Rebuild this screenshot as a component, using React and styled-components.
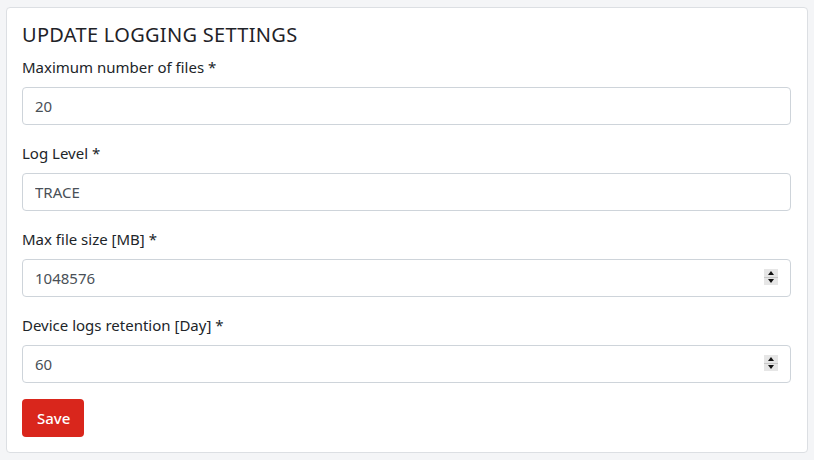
import React from 'react';
import styled, { createGlobalStyle } from 'styled-components';

const GlobalStyle = createGlobalStyle`
  html, body {
    margin: 0;
    padding: 0;
    background: #f4f5f7;
  }
  body {
    font-family: "Noto Sans", "Open Sans", sans-serif;
    color: #212529;
  }
`;

const Page = styled.div`
  padding: 7px 6px 0 6px;
`;

const Card = styled.div`
  background: #fff;
  border: 1px solid #dcdfe3;
  border-radius: 4px;
  padding: 15px 16px 15px 15px;
`;

const Title = styled.h4`
  margin: 0 0 8px 0;
  font-size: 20px;
  font-weight: 400;
  line-height: 24px;
  color: #1f2328;
  letter-spacing: 0.3px;
`;

const Group = styled.div`
  margin-bottom: 16px;
`;

const Label = styled.label`
  display: block;
  font-size: 15px;
  line-height: 24px;
  margin-bottom: 8px;
  color: #212529;
`;

const Field = styled.div`
  position: relative;
`;

const Input = styled.input`
  display: block;
  box-sizing: border-box;
  width: 100%;
  height: 38px;
  padding: 6px 12px;
  font-family: inherit;
  font-size: 15px;
  color: #495057;
  background: #fff;
  border: 1px solid #ced4da;
  border-radius: 4px;
  outline: none;
`;

const Spinner = styled.div`
  position: absolute;
  right: 13px;
  top: 10px;
  width: 14px;
  height: 16px;
  display: flex;
  flex-direction: column;
  gap: 1px;
  background: #c8c8c8;
`;

const SpinHalf = styled.div`
  flex: 1;
  background: #e6e6e6;
  display: flex;
  align-items: center;
  justify-content: center;
  &::after {
    content: '';
    border-left: 3.5px solid transparent;
    border-right: 3.5px solid transparent;
    ${p => p.up ? 'border-bottom: 4px solid #111;' : 'border-top: 4px solid #111;'}
  }
`;

const SaveButton = styled.button`
  display: block;
  margin-top: 1px;
  height: 38px;
  padding: 0 14px 0 15px;
  background: #d9261c;
  color: #fff;
  border: none;
  border-radius: 4px;
  font-family: inherit;
  font-size: 15px;
  font-weight: 500;
  cursor: pointer;
`;

const fields = [
  { label: 'Maximum number of files *', value: '20' },
  { label: 'Log Level *', value: 'TRACE' },
  { label: 'Max file size [MB] *', value: '1048576', spin: true },
  { label: 'Device logs retention [Day] *', value: '60', spin: true },
];

export default function App() {
  return (
    <Page>
      <GlobalStyle />
      <Card>
        <Title>UPDATE LOGGING SETTINGS</Title>
        {fields.map(f => (
          <Group key={f.label}>
            <Label>{f.label}</Label>
            <Field>
              <Input type="text" defaultValue={f.value} />
              {f.spin && (
                <Spinner>
                  <SpinHalf up />
                  <SpinHalf />
                </Spinner>
              )}
            </Field>
          </Group>
        ))}
        <SaveButton>Save</SaveButton>
      </Card>
    </Page>
  );
}
